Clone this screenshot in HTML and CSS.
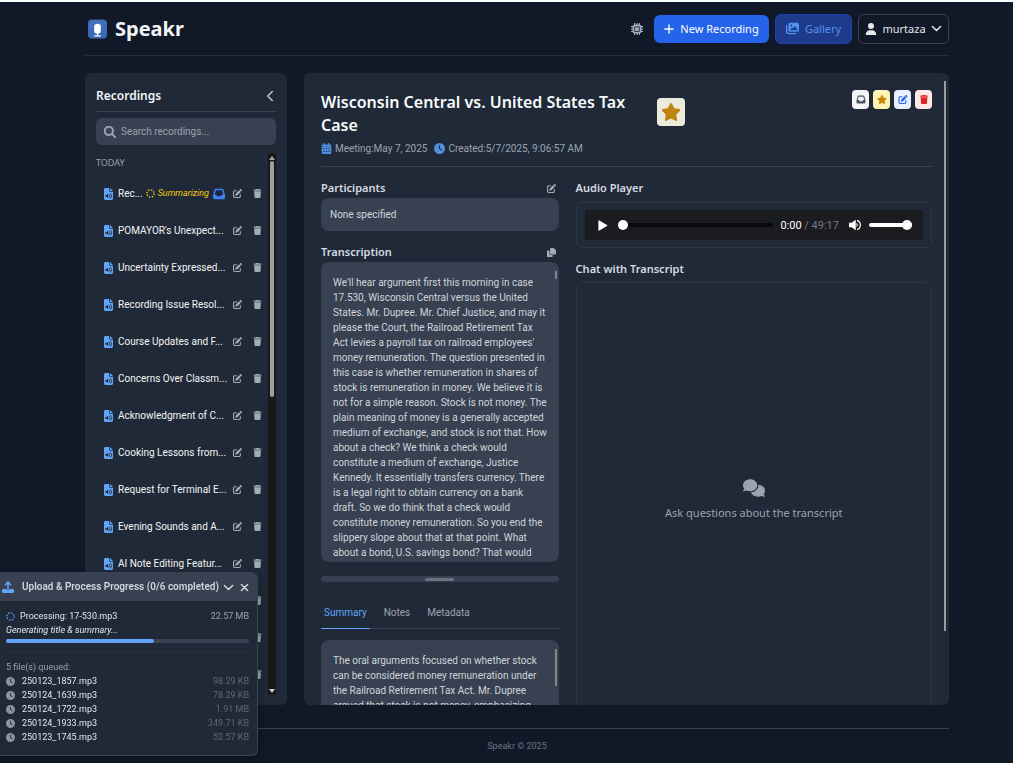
FILE: index.html
```
<!DOCTYPE html>
<html lang="en">
<head>
<meta charset="utf-8">
<title>Speakr</title>
<link rel="stylesheet" href="styles.css">
</head>
<body>
<svg class="sprite" aria-hidden="true">
  <symbol id="trash" viewBox="0 0 448 512"><path d="M135.2 17.7L128 32H32C14.3 32 0 46.3 0 64S14.3 96 32 96H416c17.7 0 32-14.3 32-32s-14.3-32-32-32H320l-7.2-14.3C307.4 6.8 296.3 0 284.2 0H163.8c-12.1 0-23.2 6.8-28.6 17.7zM416 128H32L53.2 467c1.6 25.3 22.6 45 47.9 45H346.9c25.3 0 46.3-19.7 47.9-45L416 128z"/></symbol>
  <symbol id="edit" viewBox="0 0 512 512"><path d="M471.6 21.7c-21.9-21.9-57.3-21.9-79.2 0L362.3 51.7l97.9 97.9 30.1-30.1c21.9-21.9 21.9-57.3 0-79.2L471.6 21.7zm-299.2 220c-6.1 6.1-10.8 13.6-13.5 21.9l-29.6 88.8c-2.9 8.6-.6 18.1 5.8 24.6s15.9 8.7 24.6 5.8l88.8-29.6c8.2-2.7 15.7-7.4 21.9-13.5L437.7 172.3 339.7 74.3 172.4 241.7zM96 64C43 64 0 107 0 160V416c0 53 43 96 96 96H352c53 0 96-43 96-96V320c0-17.7-14.3-32-32-32s-32 14.3-32 32v96c0 17.7-14.3 32-32 32H96c-17.7 0-32-14.3-32-32V160c0-17.7 14.3-32 32-32h96c17.7 0 32-14.3 32-32s-14.3-32-32-32H96z"/></symbol>
  <symbol id="star" viewBox="0 0 576 512"><path d="M316.9 18C311.6 7 300.4 0 288.1 0s-23.4 7-28.8 18L195 150.3 51.4 171.5c-12 1.8-22 10.2-25.7 21.7s-.7 24.2 7.9 32.7L137.8 329 113.2 474.7c-2 12 3 24.2 12.9 31.3s23 8 33.8 2.3l128.3-68.5 128.3 68.5c10.8 5.7 23.9 4.9 33.8-2.3s14.9-19.3 12.9-31.3L438.5 329 542.7 225.9c8.6-8.5 11.7-21.2 7.9-32.7s-13.7-19.9-25.7-21.7L381.2 150.3 316.9 18z"/></symbol>
  <symbol id="inbox" viewBox="0 0 512 512"><path d="M121 32C91.6 32 66 52 58.9 80.5L1.9 308.4C.6 313.5 0 318.7 0 323.9V416c0 35.3 28.7 64 64 64H448c35.3 0 64-28.7 64-64V323.9c0-5.2-.6-10.4-1.9-15.5l-57-227.9C446 52 420.4 32 391 32H121zm0 64H391l48 192H387.8c-12.1 0-23.2 6.8-28.6 17.7l-14.3 28.6c-5.4 10.8-16.5 17.7-28.6 17.7H195.8c-12.1 0-23.2-6.8-28.6-17.7l-14.3-28.6c-5.4-10.8-16.5-17.7-28.6-17.7H73L121 96z"/></symbol>
  <symbol id="search" viewBox="0 0 512 512"><path stroke="currentColor" stroke-width="20" d="M416 208c0 45.9-14.9 88.3-40 122.7L502.6 457.4c12.5 12.5 12.5 32.8 0 45.3s-32.8 12.5-45.3 0L330.7 376c-34.4 25.2-76.8 40-122.7 40C93.1 416 0 322.9 0 208S93.1 0 208 0S416 93.1 416 208zM208 352a144 144 0 1 0 0-288 144 144 0 1 0 0 288z"/></symbol>
  <symbol id="user" viewBox="0 0 448 512"><path d="M224 256A128 128 0 1 0 224 0a128 128 0 1 0 0 256zm-45.7 48C79.8 304 0 383.8 0 482.3C0 498.7 13.3 512 29.7 512H418.3c16.4 0 29.7-13.3 29.7-29.7C448 383.8 368.2 304 269.7 304H178.3z"/></symbol>
  <symbol id="clock" viewBox="0 0 512 512"><path d="M256 0a256 256 0 1 1 0 512A256 256 0 1 1 256 0zM232 120V256c0 8 4 15.5 10.7 20l96 64c11 7.4 25.9 4.4 33.3-6.7s4.4-25.9-6.7-33.3L280 243.2V120c0-13.3-10.7-24-24-24s-24 10.7-24 24z" fill-rule="evenodd"/></symbol>
  <symbol id="comments" viewBox="0 0 640 512"><path d="M208 352c114.9 0 208-78.8 208-176S322.9 0 208 0S0 78.8 0 176c0 38.6 14.7 74.3 39.6 103.4c-3.5 9.4-8.7 17.7-14.2 24.7c-4.8 6.2-12 12-19 19C-2 330 0 352 16 352c21.800 0 43.800-5.600 62.100-12.500c9.200-3.500 17.800-7.400 25.200-11.400C134.100 343.300 169.800 352 208 352zM448 176c0 112.300-99.100 196.900-216.500 207C255.800 457.400 336.400 512 432 512c38.200 0 73.900-8.700 104.700-23.900c7.500 4 16 7.900 25.200 11.400c18.300 6.900 40.300 12.500 62.100 12.500c15 0 23-20 10-29c-11-9-24-22-33.600-43.600C625.300 410.300 640 374.600 640 336c0-92.800-84.900-168.900-192.600-175.500c.4 5.100 .6 10.300 .6 15.500z"/></symbol>
  <symbol id="file-audio" viewBox="0 0 384 512"><path fill-rule="evenodd" d="M64 0C29 0 0 29 0 64V448c0 35 29 64 64 64H320c35 0 64-29 64-64V160H256c-18 0-32-14-32-32V0zM256 0V128H384zM70 300h42l48-48c8-8 20-3 20 8v152c0 11-12 16-20 8l-48-48H70c-6 0-10-4-10-10v-52c0-6 4-10 10-10zM210 290c28 22 28 70 0 92l18 24c44-35 44-105 0-140zM254 238c62 50 62 146 0 196l20 26c80-62 80-186 0-248z"/></symbol>
  <symbol id="chip" viewBox="0 0 16 16"><path fill-rule="evenodd" d="M4 0h1.500v2h1.750V0h1.500v2h1.750V0H12v2.200A2 2 0 0 1 13.800 4H16v1.500h-2v1.750h2v1.500h-2v1.750h2V12h-2.200A2 2 0 0 1 12 13.800V16h-1.500v-2H8.750v2h-1.500v-2H5.500v2H4v-2.200A2 2 0 0 1 2.200 12H0v-1.500h2V8.750H0v-1.500h2V5.500H0V4h2.200A2 2 0 0 1 4 2.200zM4.500 4.500v7h7v-7zM5.500 5.500h5v5h-5z"/></symbol>
  <symbol id="images" viewBox="0 0 16 14"><path fill-rule="evenodd" d="M5 0h9a2 2 0 0 1 2 2v7a2 2 0 0 1-2 2H5a2 2 0 0 1-2-2V2a2 2 0 0 1 2-2zM6.500 2a1.300 1.300 0 1 0 0 2.600a1.300 1.300 0 0 0 0-2.600zM4.700 9h9.800L11 3.800 8.700 7 7.500 5.700z"/><path d="M0 3.500a.8.8 0 0 1 1.600 0V10a2.500 2.500 0 0 0 2.500 2.400H12a.8.8 0 0 1 0 1.600H4a4 4 0 0 1-4-4z"/></symbol>
  <symbol id="calendar" viewBox="0 0 14 16"><path fill-rule="evenodd" d="M3 0h2v2h4V0h2v2h1.500A1.500 1.500 0 0 1 14 3.500V5H0V3.500A1.500 1.500 0 0 1 1.500 2H3zM0 5.500h14v9a1.500 1.500 0 0 1-1.500 1.500h-11A1.500 1.500 0 0 1 0 14.500zM2.200 7.500v1.600h1.800v-1.600zM6.100 7.500v1.600h1.800v-1.600zM10 7.500v1.600h1.800v-1.600zM2.200 11.500v1.600h1.800v-1.600zM6.100 11.500v1.600h1.800v-1.600zM10 11.500v1.600h1.800v-1.600z"/></symbol>
  <symbol id="copy" viewBox="0 0 16 16"><path d="M7 0h5l4 4v6a1.500 1.500 0 0 1-1.500 1.500H7A1.500 1.500 0 0 1 5.500 10V1.500A1.500 1.500 0 0 1 7 0zM1.500 4.500h3V11A1.700 1.700 0 0 0 6.200 12.600H10v1.900A1.500 1.500 0 0 1 8.500 16h-7A1.500 1.500 0 0 1 0 14.500V6a1.500 1.500 0 0 1 1.500-1.500z"/></symbol>
  <symbol id="spinner" viewBox="0 0 16 16"><circle cx="8" cy="8" r="6.500" fill="none" stroke="currentColor" stroke-width="2.400" stroke-dasharray="2.600 2.505"/></symbol>
  <symbol id="down" viewBox="0 0 16 10"><path d="M2 2l6 6 6-6" fill="none" stroke="currentColor" stroke-width="2.200" stroke-linecap="round" stroke-linejoin="round"/></symbol>
  <symbol id="left" viewBox="0 0 10 16"><path d="M8 2L2 8l6 6" fill="none" stroke="currentColor" stroke-width="2" stroke-linecap="round" stroke-linejoin="round"/></symbol>
  <symbol id="plus" viewBox="0 0 16 16"><path d="M8 1.500v13M1.500 8h13" stroke="currentColor" stroke-width="2.200" stroke-linecap="round"/></symbol>
  <symbol id="close" viewBox="0 0 16 16"><path d="M2.500 2.500l11 11M13.500 2.500l-11 11" stroke="currentColor" stroke-width="2.600" stroke-linecap="round"/></symbol>
  <symbol id="upload" viewBox="0 0 16 16"><path d="M8 11V2M4.500 5L8 1.500 11.500 5" fill="none" stroke="currentColor" stroke-width="2" stroke-linecap="round" stroke-linejoin="round"/><path d="M1.500 10.500H6v1.200h4v-1.200h4.500A1.500 1.500 0 0 1 16 12v2.500a1.500 1.500 0 0 1-1.500 1.500h-13A1.500 1.500 0 0 1 0 14.500V12a1.500 1.500 0 0 1 1.500-1.500z"/></symbol>
  <symbol id="play" viewBox="0 0 16 16"><path d="M2 1.500v13c0 1 .8 1.300 1.500.9l11-6.500c.7-.4.7-1.400 0-1.800L3.500.6C2.800.2 2 .5 2 1.500z"/></symbol>
  <symbol id="volume" viewBox="0 0 16 16"><path d="M0 5v6h3.500L9 15V1L3.500 5z"/><path d="M10 5a3.500 3.500 0 0 1 0 6z"/><path d="M10.800 1.800a6.600 6.600 0 0 1 0 12.400" fill="none" stroke="currentColor" stroke-width="1.600"/></symbol>
</svg>

<header class="topbar">
  <h1 class="brand">
    <svg class="logo" viewBox="0 0 20 20" aria-hidden="true">
      <rect width="20" height="20" rx="4" fill="#3c69b4"/>
      <rect x="1" y="1" width="18" height="9" rx="4" fill="#4677c2" opacity=".5"/>
      <rect x="6.500" y="4.500" width="7" height="10.500" rx="3.500" fill="#fff"/>
      <path d="M10 14v3M6.500 17.300h7" stroke="#fff" stroke-width="1.200"/>
    </svg>
    Speakr
  </h1>
  <nav class="actions">
    <button class="theme" aria-label="Toggle theme"><svg class="i12"><use href="#chip"/></svg></button>
    <button class="btn primary"><svg class="i10"><use href="#plus"/></svg>New Recording</button>
    <button class="btn gallery"><svg class="i13"><use href="#images"/></svg>Gallery</button>
    <button class="btn account"><svg class="i12"><use href="#user"/></svg>murtaza<svg class="i11"><use href="#down"/></svg></button>
  </nav>
</header>

<div class="workspace">
  <aside class="sidebar">
    <div class="side-head">
      <h2>Recordings</h2>
      <button aria-label="Collapse sidebar"><svg class="i12"><use href="#left"/></svg></button>
    </div>
    <label class="search"><svg class="i12"><use href="#search"/></svg><input type="search" placeholder="Search recordings..." aria-label="Search recordings"></label>
    <div class="list-area">
      <div class="list">
        <h3>TODAY</h3>
        <ul>
          <li><svg class="file"><use href="#file-audio"/></svg><span class="name">Rec...</span><span class="status"><svg class="i9"><use href="#spinner"/></svg>Summarizing</span><svg class="inbox"><use href="#inbox"/></svg><button aria-label="Edit"><svg><use href="#edit"/></svg></button><button aria-label="Delete"><svg><use href="#trash"/></svg></button></li>
          <li><svg class="file"><use href="#file-audio"/></svg><span class="name">POMAYOR's Unexpect...</span><button aria-label="Edit"><svg><use href="#edit"/></svg></button><button aria-label="Delete"><svg><use href="#trash"/></svg></button></li>
          <li><svg class="file"><use href="#file-audio"/></svg><span class="name">Uncertainty Expressed...</span><button aria-label="Edit"><svg><use href="#edit"/></svg></button><button aria-label="Delete"><svg><use href="#trash"/></svg></button></li>
          <li><svg class="file"><use href="#file-audio"/></svg><span class="name">Recording Issue Resol...</span><button aria-label="Edit"><svg><use href="#edit"/></svg></button><button aria-label="Delete"><svg><use href="#trash"/></svg></button></li>
          <li><svg class="file"><use href="#file-audio"/></svg><span class="name">Course Updates and F...</span><button aria-label="Edit"><svg><use href="#edit"/></svg></button><button aria-label="Delete"><svg><use href="#trash"/></svg></button></li>
          <li><svg class="file"><use href="#file-audio"/></svg><span class="name">Concerns Over Classm...</span><button aria-label="Edit"><svg><use href="#edit"/></svg></button><button aria-label="Delete"><svg><use href="#trash"/></svg></button></li>
          <li><svg class="file"><use href="#file-audio"/></svg><span class="name">Acknowledgment of C...</span><button aria-label="Edit"><svg><use href="#edit"/></svg></button><button aria-label="Delete"><svg><use href="#trash"/></svg></button></li>
          <li><svg class="file"><use href="#file-audio"/></svg><span class="name">Cooking Lessons from...</span><button aria-label="Edit"><svg><use href="#edit"/></svg></button><button aria-label="Delete"><svg><use href="#trash"/></svg></button></li>
          <li><svg class="file"><use href="#file-audio"/></svg><span class="name">Request for Terminal E...</span><button aria-label="Edit"><svg><use href="#edit"/></svg></button><button aria-label="Delete"><svg><use href="#trash"/></svg></button></li>
          <li><svg class="file"><use href="#file-audio"/></svg><span class="name">Evening Sounds and A...</span><button aria-label="Edit"><svg><use href="#edit"/></svg></button><button aria-label="Delete"><svg><use href="#trash"/></svg></button></li>
          <li><svg class="file"><use href="#file-audio"/></svg><span class="name">AI Note Editing Featur...</span><button aria-label="Edit"><svg><use href="#edit"/></svg></button><button aria-label="Delete"><svg><use href="#trash"/></svg></button></li>
          <li><svg class="file"><use href="#file-audio"/></svg><span class="name"></span><button aria-label="Edit"><svg><use href="#edit"/></svg></button><button aria-label="Delete"><svg><use href="#trash"/></svg></button></li>
          <li><svg class="file"><use href="#file-audio"/></svg><span class="name"></span><button aria-label="Edit"><svg><use href="#edit"/></svg></button><button aria-label="Delete"><svg><use href="#trash"/></svg></button></li>
          <li><svg class="file"><use href="#file-audio"/></svg><span class="name"></span><button aria-label="Edit"><svg><use href="#edit"/></svg></button><button aria-label="Delete"><svg><use href="#trash"/></svg></button></li>
        </ul>
      </div>
      <div class="track"><i class="arrow up"></i><i class="thumb"></i><i class="arrow dn"></i></div>
    </div>
  </aside>

  <main class="detail">
    <div class="detail-scroll"></div>
    <div class="detail-head">
      <div class="title-block">
        <h2>Wisconsin Central vs. United States Tax Case</h2>
        <p class="meta"><svg class="i11"><use href="#calendar"/></svg><span>Meeting:May 7, 2025</span><svg class="i11"><use href="#clock"/></svg><span>Created:5/7/2025, 9:06:57 AM</span></p>
      </div>
      <span class="star-badge"><svg><use href="#star"/></svg></span>
      <div class="tools">
        <button class="t-inbox" aria-label="Move to inbox"><svg><use href="#inbox"/></svg></button>
        <button class="t-star" aria-label="Highlight"><svg><use href="#star"/></svg></button>
        <button class="t-edit" aria-label="Edit"><svg><use href="#edit"/></svg></button>
        <button class="t-del" aria-label="Delete"><svg><use href="#trash"/></svg></button>
      </div>
    </div>
    <div class="columns">
      <section class="col">
        <div class="label"><h3>Participants</h3><button aria-label="Edit participants"><svg class="i9"><use href="#edit"/></svg></button></div>
        <div class="box people">None specified</div>
        <div class="label second"><h3>Transcription</h3><button aria-label="Copy transcription"><svg class="i9"><use href="#copy"/></svg></button></div>
        <div class="box transcript"><i class="mini"></i>We'll hear argument first this morning in case<br>17.530, Wisconsin Central versus the United<br>States. Mr. Dupree. Mr. Chief Justice, and may it<br>please the Court, the Railroad Retirement Tax<br>Act levies a payroll tax on railroad employees'<br>money remuneration. The question presented in<br>this case is whether remuneration in shares of<br>stock is remuneration in money. We believe it is<br>not for a simple reason. Stock is not money. The<br>plain meaning of money is a generally accepted<br>medium of exchange, and stock is not that. How<br>about a check? We think a check would<br>constitute a medium of exchange, Justice<br>Kennedy. It essentially transfers currency. There<br>is a legal right to obtain currency on a bank<br>draft. So we do think that a check would<br>constitute money remuneration. So you end the<br>slippery slope about that at that point. What<br>about a bond, U.S. savings bond? That would<br>not be, Your Honor. We don't think that a</div>
        <div class="resizer"><i></i></div>
        <nav class="tabs"><a class="on" href="#summary">Summary</a><a href="#notes">Notes</a><a href="#metadata">Metadata</a></nav>
        <div class="box summary" id="summary"><i class="mini"></i>The oral arguments focused on whether stock<br>can be considered money remuneration under<br>the Railroad Retirement Tax Act. Mr. Dupree<br>argued that stock is not money, emphasizing</div>
      </section>
      <section class="col">
        <div class="label"><h3>Audio Player</h3></div>
        <div class="player-frame">
          <div class="player">
            <button aria-label="Play"><svg class="i11"><use href="#play"/></svg></button>
            <input class="seek" type="range" value="0" aria-label="Seek">
            <span class="time">0:00 <em>/ 49:17</em></span>
            <button class="mute" aria-label="Mute"><svg class="i12"><use href="#volume"/></svg></button>
            <input class="vol" type="range" value="100" aria-label="Volume">
          </div>
        </div>
        <div class="label second"><h3>Chat with Transcript</h3></div>
        <div class="chat"><svg><use href="#comments"/></svg><p>Ask questions about the transcript</p></div>
      </section>
    </div>
  </main>
</div>

<footer>Speakr © 2025</footer>

<section class="popup" aria-label="Upload progress">
  <div class="popup-head"><svg class="i12 blue"><use href="#upload"/></svg><h2>Upload &amp; Process Progress (0/6 completed)</h2><button aria-label="Minimize"><svg class="i11"><use href="#down"/></svg></button><button class="x" aria-label="Close"><svg class="i9"><use href="#close"/></svg></button></div>
  <div class="popup-body">
    <div class="job"><svg class="i9 blue"><use href="#spinner"/></svg><span>Processing: 17-530.mp3</span><span class="size">22.57 MB</span></div>
    <p class="stage">Generating title &amp; summary...</p>
    <div class="bar"><i style="width:61%"></i></div>
    <p class="queued">5 file(s) queued:</p>
    <ul>
      <li><svg class="i9"><use href="#clock"/></svg><span>250123_1857.mp3</span><span class="size">98.29 KB</span></li>
      <li><svg class="i9"><use href="#clock"/></svg><span>250124_1639.mp3</span><span class="size">78.29 KB</span></li>
      <li><svg class="i9"><use href="#clock"/></svg><span>250124_1722.mp3</span><span class="size">1.91 MB</span></li>
      <li><svg class="i9"><use href="#clock"/></svg><span>250124_1933.mp3</span><span class="size">349.71 KB</span></li>
      <li><svg class="i9"><use href="#clock"/></svg><span>250123_1745.mp3</span><span class="size">52.57 KB</span></li>
    </ul>
  </div>
</section>
</body>
</html>
```
FILE: styles.css
```
* { box-sizing: border-box; margin: 0; padding: 0; }
body {
  height: 100vh;
  display: flex;
  flex-direction: column;
  padding: 0 64px 0 85px;
  border-top: 2px solid #f8fafc;
  background: #111827;
  color: #f3f4f6;
  font: 10px/15px Roboto, "Open Sans", sans-serif;
  overflow: hidden;
}
h1, h2, h3, .actions, .chat { font-family: "Noto Sans", "Open Sans", sans-serif; }
button { background: none; border: 0; color: inherit; font: inherit; cursor: pointer; }
button, svg { flex: none; }
button { display: flex; align-items: center; justify-content: center; }
svg { display: block; fill: currentColor; }
ul { list-style: none; }
a { color: inherit; text-decoration: none; }
.sprite { position: absolute; width: 0; height: 0; }
.i9 { width: 9px; height: 9px; }
.i10 { width: 10px; height: 10px; }
.i11 { width: 11px; height: 11px; }
.i12 { width: 12px; height: 12px; }
.i13 { width: 13px; height: 13px; }
.blue { color: #60a5fa; }

/* Top bar */
.topbar {
  flex: none;
  display: flex;
  justify-content: space-between;
  align-items: center;
  height: 54px;
  border-bottom: 1px solid #232d3c;
}
.brand { display: flex; align-items: center; gap: 8px; padding-left: 3px; font-size: 20px; line-height: 28px; font-weight: 700; }
.logo { width: 19px; height: 20px; }
.actions { display: flex; align-items: center; gap: 6px; font-size: 11px; }
.theme { color: #a3abb8; margin-right: 5px; }
.btn { height: 30px; border-radius: 6px; gap: 6px; }
.primary { width: 115px; height: 28px; background: #2563eb; color: #fff; }
.gallery { width: 77px; background: #1e3a8a; border: 1px solid #1e40af; color: #5393ee; }
.account { width: 91px; border: 1px solid #3a4454; color: #e5e7eb; gap: 5px; }

/* Columns */
.workspace { flex: 1; min-height: 0; display: flex; gap: 17px; padding-top: 17px; }
.sidebar { flex: none; width: 202px; display: flex; flex-direction: column; padding: 7px 11px 10px; background: #1f2937; border-radius: 6px; }
.side-head { display: flex; justify-content: space-between; align-items: center; height: 32px; border-bottom: 1px solid #374151; margin-bottom: 6px; }
.side-head h2 { font-size: 12px; line-height: 18px; font-weight: 600; }
.side-head button { color: #c3c9d2; }
.search { display: flex; align-items: center; gap: 5px; height: 27px; padding-left: 8px; background: #374151; border-radius: 6px; color: #a3abb8; }
.search input { flex: 1; min-width: 0; background: none; border: 0; outline: 0; color: inherit; font: inherit; }
.search input::placeholder { color: #9ca3af; opacity: 1; }
.list-area { flex: 1; min-height: 0; display: flex; margin-top: 8px; }
.list { flex: 1; min-width: 0; overflow: hidden; padding-right: 5px; }
.list h3 { font-size: 9px; line-height: 14px; font-weight: 400; color: #9ca3af; padding-top: 3px; margin-bottom: 5px; }
.list li { display: flex; align-items: center; height: 37px; padding-left: 8px; color: #f3f4f6; }
.file { width: 9px; height: 12px; color: #60a5fa; margin-right: 5px; }
.name { flex: 1; min-width: 0; white-space: nowrap; }
.list button { width: 12px; color: #a3abb8; margin-left: 7px; }
.list button + button { margin-left: 8px; }
.list button svg { width: 9px; height: 9px; }
.status { display: flex; align-items: center; gap: 3px; font-size: 9px; font-style: italic; color: #facc15; }
.inbox { width: 12px; height: 12px; color: #3b82f6; margin-left: 4px; }
.list .inbox + button { margin-left: 6px; }
.track { flex: none; width: 8px; display: flex; flex-direction: column; align-items: center; background: #181818; padding: 3px 0 2px; }
.arrow { border: 3px solid transparent; }
.up { border-top: 0; border-bottom: 4px solid #a8a8a8; }
.dn { border-bottom: 0; border-top: 4px solid #c8c8c8; margin-top: auto; }
.thumb { width: 4px; height: 44%; margin-top: 1px; border-radius: 2px; background: #9f9f9f; }

/* Recording detail */
.detail { position: relative; flex: 1; min-width: 0; padding: 17px 17px 0; background: #1f2937; border-radius: 6px; overflow: hidden; }
.detail-scroll { position: absolute; top: 8px; right: 3px; width: 2px; height: 87%; background: #9b9d9c; }
.detail-head { display: flex; align-items: flex-start; height: 77px; border-bottom: 1px solid #374151; }
.title-block { width: 323px; padding-top: 1px; }
.title-block h2 { font-size: 16px; line-height: 23px; font-weight: 600; color: #f9fafb; }
.meta { display: flex; align-items: center; gap: 3px; margin-top: 4px; color: #9ca3af; }
.meta svg { color: #4f8fdf; }
.meta span + svg { margin-left: 4px; }
.star-badge { display: flex; align-items: center; justify-content: center; width: 28px; height: 28px; margin: 8px 0 0 13px; border-radius: 4px; background: #eceadb; color: #bf830f; }
.star-badge svg { width: 20px; height: 18px; }
.tools { display: flex; gap: 4px; margin-left: auto; }
.tools button { width: 17px; height: 19px; border-radius: 4px; }
.tools svg { width: 10px; height: 9px; }
.t-inbox { background: #f3f4f6; color: #4b5563; }
.t-star { background: #fef3b0; color: #c8860a; }
.t-edit { background: #e8f1fe; color: #2563eb; }
.t-del { background: #fee8e8; color: #dc2626; }
.columns { display: grid; grid-template-columns: 2fr 3fr; gap: 17px; padding-top: 12px; }
.col { min-width: 0; }
.label { display: flex; justify-content: space-between; align-items: center; height: 18px; margin-bottom: 1px; }
.label h3 { font-size: 11px; line-height: 18px; font-weight: 600; color: #d7dbe1; }
.label button { color: #a3abb8; margin-right: 3px; }
.second { margin-top: 12px; }
.box { position: relative; background: #374151; border-radius: 8px; color: #d1d5db; }
.people { height: 33px; padding: 9px; }
.transcript { height: 300px; padding: 13px 0 0 12px; white-space: nowrap; overflow: hidden; }
.mini { position: absolute; right: 2px; top: 9px; width: 2px; height: 8px; background: #7d858f; }
.resizer { display: flex; justify-content: center; align-items: center; height: 6px; margin-top: 14px; border-radius: 3px; background: #374151; }
.resizer i { width: 29px; height: 3px; border-radius: 2px; background: #6b7280; }
.tabs { display: flex; gap: 11px; height: 47px; align-items: flex-end; border-bottom: 1px solid #374151; color: #9ca3af; font-size: 10px; }
.tabs a { padding: 0 3px 8px; border-bottom: 1px solid transparent; margin-bottom: -1px; }
.tabs .on { color: #60a5fa; border-color: #60a5fa; }
.summary { margin-top: 11px; height: 110px; padding: 13px 0 0 12px; white-space: nowrap; overflow: hidden; }
.summary .mini { height: 37px; background: #86897f; }

/* Audio player */
.player-frame { height: 46px; padding: 7px 8px; margin-top: 5px; border: 1px solid #2b3646; border-radius: 6px; }
.player { display: flex; align-items: center; height: 30px; padding: 0 11px 0 12px; background: #1b1c1f; color: #fff; }
.player input { appearance: none; min-width: 0; height: 4px; border-radius: 2px; }
.player input::-webkit-slider-thumb { appearance: none; width: 10px; height: 10px; border-radius: 50%; background: #fff; }
.seek { flex: 1; margin-left: 10px; background: #08090a; }
.vol { width: 43px; background: #fff; }
.time { margin: 0 10px 0 7px; font-size: 11px; }
.time em { font-style: normal; color: #777b80; }
.mute { margin-right: 8px; }

/* Chat */
.chat { display: flex; flex-direction: column; align-items: center; justify-content: center; gap: 8px; height: 434px; margin-top: 4px; border: 1px solid #2b3646; border-radius: 8px; color: #9ca3af; font-size: 11px; }
.chat svg { width: 22px; height: 18px; }

footer { flex: none; height: 35px; margin-top: 23px; padding-top: 10px; border-top: 1px solid #374151; text-align: center; font-size: 9px; color: #6b7280; }

/* Upload progress popup */
.popup { position: fixed; left: 0; bottom: 7px; width: 258px; background: #1f2937; border: 1px solid #374151; border-left: 0; border-radius: 0 6px 6px 0; overflow: hidden; font-size: 9px; line-height: 14px; color: #e5e7eb; box-shadow: 0 4px 10px rgba(0, 0, 0, .3); }
.popup-head { display: flex; align-items: center; height: 28px; padding: 0 8px 0 2px; background: #374151; color: #d1d5db; }
.popup-head h2 { padding: 0 4px 0 8px; font: 600 10px/14px Roboto, sans-serif; white-space: nowrap; }
.x { margin-left: auto; }
.popup-body { padding: 8px 8px 11px 6px; }
.job, .popup li { display: flex; align-items: center; gap: 5px; }
.job .size { color: #9ca3af; }
.size { margin-left: auto; color: #5f6875; }
.stage { font-style: italic; }
.bar { height: 4px; margin: 2px 0 9px; border-radius: 2px; background: #374151; }
.bar i { display: block; height: 100%; border-radius: 2px; background: #60a5fa; }
.queued { border-top: 1px dotted #303b4a; padding-top: 7px; color: #9ca3af; }
.popup li { gap: 7px; }
.popup li svg { color: #8b93a0; }
```
